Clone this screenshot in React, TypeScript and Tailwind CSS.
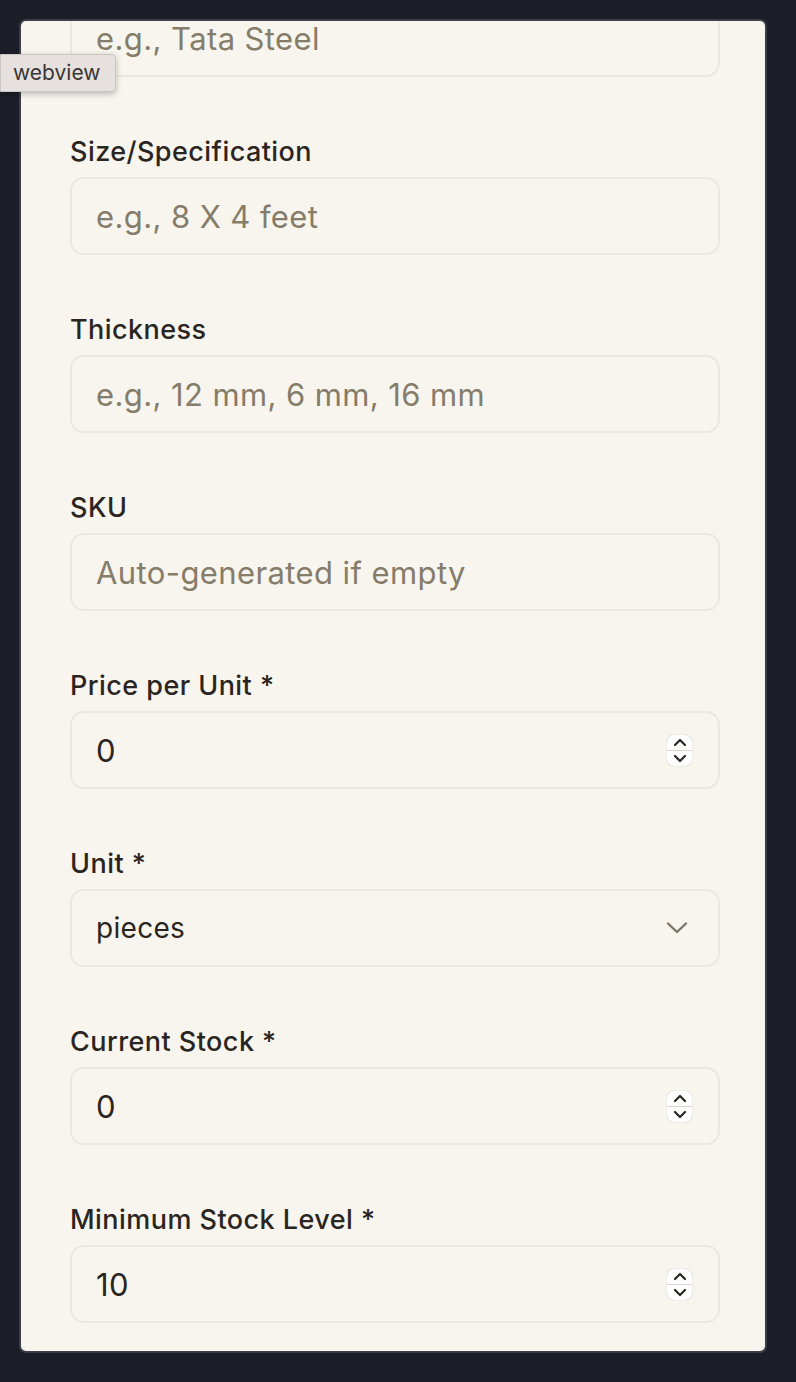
import React from "react";

type Field = {
  label: string;
  placeholder?: string;
  value?: string;
  kind: "text" | "number" | "select";
};

const fields: Field[] = [
  { label: "Brand", placeholder: "e.g., Tata Steel", kind: "text" },
  { label: "Size/Specification", placeholder: "e.g., 8 X 4 feet", kind: "text" },
  { label: "Thickness", placeholder: "e.g., 12 mm, 6 mm, 16 mm", kind: "text" },
  { label: "SKU", placeholder: "Auto-generated if empty", kind: "text" },
  { label: "Price per Unit *", value: "0", kind: "number" },
  { label: "Unit *", value: "pieces", kind: "select" },
  { label: "Current Stock *", value: "0", kind: "number" },
  { label: "Minimum Stock Level *", value: "10", kind: "number" },
];

function Spinner() {
  return (
    <div className="flex h-[31px] w-[25px] flex-col items-center justify-between rounded-[7px] bg-white py-[3px] shadow-[0_0_1px_rgba(0,0,0,0.35)]">
      <svg width="14" height="9" viewBox="0 0 14 9" fill="none">
        <path d="M2 7l5-5 5 5" stroke="#2a2623" strokeWidth="2.2" strokeLinecap="round" strokeLinejoin="round" />
      </svg>
      <div className="h-px w-full bg-[#d9d6d1]" />
      <svg width="14" height="9" viewBox="0 0 14 9" fill="none">
        <path d="M2 2l5 5 5-5" stroke="#2a2623" strokeWidth="2.2" strokeLinecap="round" strokeLinejoin="round" />
      </svg>
    </div>
  );
}

function FieldRow({ f }: { f: Field }) {
  return (
    <div className="flex flex-col">
      <label className="mb-[7px] text-[27px] font-medium leading-[36px] tracking-[0.45px] text-[#2b2521]">{f.label}</label>
      <div className="flex h-[78px] items-center justify-between rounded-[14px] border-2 border-[#ebe8e1] bg-[#f7f5ee] pl-[24px] pr-[26px]">
        {f.kind === "select" ? (
          <span className="text-[28px] leading-none tracking-[0.3px] text-[#2b2521]">{f.value}</span>
        ) : f.value ? (
          <span className="text-[31px] leading-none tracking-[0.3px] text-[#2b2521]">{f.value}</span>
        ) : (
          <span className="text-[31px] leading-none tracking-[0.4px] text-[#857c6a]">{f.placeholder}</span>
        )}
        {f.kind === "number" && <Spinner />}
        {f.kind === "select" && (
          <svg width="22" height="14" viewBox="0 0 22 14" fill="none" className="mr-[4px]">
            <path d="M2 2.5l9 8.5 9-8.5" stroke="#7c7468" strokeWidth="2.4" strokeLinecap="round" strokeLinejoin="round" />
          </svg>
        )}
      </div>
    </div>
  );
}

export default function App() {
  return (
    <div className="relative h-[1382px] w-[796px] bg-[#1b1e26] pt-[19px] font-['Inter',sans-serif]">
      <div className="ml-[19px] h-[1334px] w-[748px] overflow-hidden rounded-[7px] border-2 border-[#3b3e46] bg-[#f7f5ee]">
        <div className="mt-[-65px] flex flex-col gap-[57px] pl-[49px] pr-[45px]">
          {fields.map((f) => (
            <FieldRow key={f.label} f={f} />
          ))}
        </div>
      </div>
      <div className="absolute left-0 top-[54px] flex h-[38px] w-[116px] items-center rounded-r-[4px] border border-[#cbc6c3] bg-[#e6e1df] pl-[12px] text-[21px] text-[#3a3634] shadow-[0_2px_6px_rgba(0,0,0,0.25)]">
        webview
      </div>
    </div>
  );
}
